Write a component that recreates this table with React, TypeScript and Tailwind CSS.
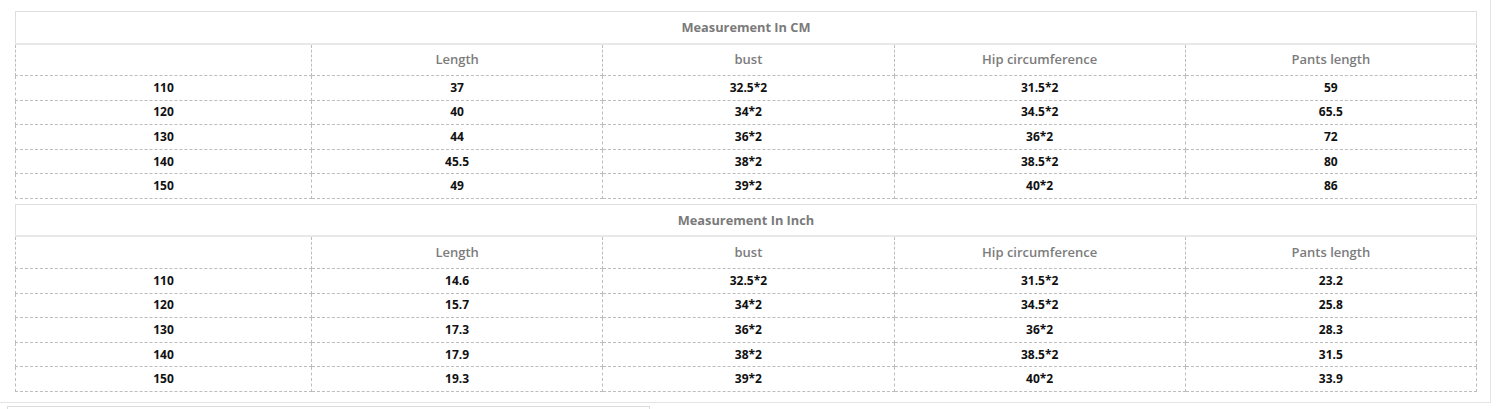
import React from "react";

const cm = [
  ["110", "37", "32.5*2", "31.5*2", "59"],
  ["120", "40", "34*2", "34.5*2", "65.5"],
  ["130", "44", "36*2", "36*2", "72"],
  ["140", "45.5", "38*2", "38.5*2", "80"],
  ["150", "49", "39*2", "40*2", "86"],
];
const inch = [
  ["110", "14.6", "32.5*2", "31.5*2", "23.2"],
  ["120", "15.7", "34*2", "34.5*2", "25.8"],
  ["130", "17.3", "36*2", "36*2", "28.3"],
  ["140", "17.9", "38*2", "38.5*2", "31.5"],
  ["150", "19.3", "39*2", "40*2", "33.9"],
];
const heads = ["", "Length", "bust", "Hip circumference", "Pants length"];

function SizeTable({ title, rows }: { title: string; rows: string[][] }) {
  return (
    <table className="w-[1462px] table-fixed border-collapse text-center">
      <colgroup>
        <col className="w-[296px]" />
        <col />
        <col />
        <col />
        <col />
      </colgroup>
      <tbody>
        <tr className="h-[32px]">
          <td
            colSpan={5}
            className="border border-solid border-[#dedede] border-b-2 border-b-[#e8e8e8] text-[12.8px] font-bold text-[#7a7a7a] p-0"
          >
            {title}
          </td>
        </tr>
        <tr className="h-[32px]">
          {heads.map((h, i) => (
            <td
              key={i}
              className="border border-dashed border-[#bdbdbd] border-t-0 text-[13px] font-semibold text-[#7c7c7c] p-0"
            >
              {h}
            </td>
          ))}
        </tr>
        {rows.map((r, ri) => (
          <tr key={ri} className="h-[24.6px]">
            {r.map((c, ci) => (
              <td
                key={ci}
                className="border border-dashed border-[#bdbdbd] text-[12px] font-bold text-[#111] p-0"
              >
                {c}
              </td>
            ))}
          </tr>
        ))}
      </tbody>
    </table>
  );
}

export default function App() {
  return (
    <div
      className="bg-white w-[1500px] h-[409px] overflow-hidden"
      style={{ fontFamily: '"Open Sans", "Noto Sans", sans-serif' }}
    >
      <div className="w-[1491px] h-[403px] border-r border-b border-[#e4e4e4] pl-[15px] pt-[11px] flex flex-col gap-[5px]">
        <SizeTable title="Measurement In CM" rows={cm} />
        <SizeTable title="Measurement In Inch" rows={inch} />
      </div>
      <div className="ml-[7px] mt-[3px] w-[643px] h-[20px] border border-[#dcdcdc]" />
    </div>
  );
}
